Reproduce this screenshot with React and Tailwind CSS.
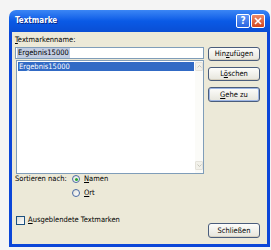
import React from 'react'

const font = "font-['DejaVu_Sans_Condensed','Liberation_Sans',sans-serif]"

function XpButton({ children, focus = false, className = '' }) {
  return (
    <div
      className={`flex w-[52px] items-center justify-center rounded-[3px] border border-[#4a5d7c] bg-gradient-to-b from-[#fdfdfb] to-[#e6e5dc] text-[7.5px] leading-none text-black ${
        focus ? 'shadow-[inset_0_0_0_1px_#9db5e4]' : 'shadow-[inset_0_-1px_0_#d6d0c0]'
      } ${className}`}
    >
      {children}
    </div>
  )
}

function Radio({ checked }) {
  return (
    <div className="flex h-[8px] w-[8px] items-center justify-center rounded-full border border-[#4a6aa4] bg-gradient-to-br from-[#e2e2da] to-white">
      {checked && <div className="h-[3px] w-[3px] rounded-full bg-[#29a531]" />}
    </div>
  )
}

export default function App() {
  return (
    <div className={`h-[250px] w-[271px] overflow-hidden bg-[#f4f4f4] pl-[9px] pt-[10px] ${font}`}>
      <div className="flex h-[237px] w-[261px] flex-col overflow-hidden rounded-t-[7px]">
        {/* title bar */}
        <div className="flex h-[22px] items-center justify-between bg-gradient-to-b from-[#3b86f5] via-[#0a5ae6] to-[#0a4ed4] pl-[6px] pr-[5px]">
          <span className="text-[8px] font-bold text-white [text-shadow:1px_1px_0_#0a2a8a]">Textmarke</span>
          <div className="flex gap-[1px]">
            <div className="flex h-[14px] w-[14px] items-center justify-center rounded-[2px] border border-white bg-gradient-to-b from-[#5d95f6] to-[#2a64e0] text-[10px] font-bold leading-none text-white">
              ?
            </div>
            <div className="flex h-[14px] w-[14px] items-center justify-center rounded-[2px] border border-white bg-gradient-to-b from-[#ec8a68] to-[#d2451d]">
              <svg width="8" height="8" viewBox="0 0 8 8">
                <path d="M1 1L7 7M7 1L1 7" stroke="white" strokeWidth="1.6" />
              </svg>
            </div>
          </div>
        </div>

        {/* client */}
        <div className="flex flex-1 border-x-[3px] border-b-[3px] border-[#0b46d8] bg-[#ece9d8] text-[7.5px] leading-none text-black">
          <div className="flex w-[192px] flex-col pl-[3px] pt-[3px]">
            <div className="flex h-[12px] items-start pt-[1px]">
              <span>
                <span className="underline">T</span>extmarkenname:
              </span>
            </div>
            <div className="flex h-[12px] w-[189px] items-center border border-[#7f9db9] bg-white pl-[1px]">
              <span className="bg-[#c2cde2] px-[1px] py-[1px]">Ergebnis15000</span>
            </div>
            <div className="ml-[1px] mt-[1px] flex h-[114px] w-[188px] border border-[#7f9db9] bg-white">
              <div className="flex-1 p-[1px]">
                <div className="flex h-[9px] items-center bg-[#316ac5] pl-[1px] text-white">Ergebnis15000</div>
              </div>
              <div className="flex w-[8px] flex-col justify-between bg-[#fbfbf8] py-[1px]">
                <div className="flex h-[9px] items-center justify-center rounded-[1px] border border-[#e4e2da] bg-[#f2f1ea]">
                  <svg width="5" height="3" viewBox="0 0 5 3">
                    <path d="M0.5 2.5L2.5 0.5L4.5 2.5" stroke="#c6c4ba" fill="none" />
                  </svg>
                </div>
                <div className="mb-[2px] flex h-[9px] items-center justify-center rounded-[1px] border border-[#e4e2da] bg-[#f2f1ea]">
                  <svg width="5" height="3" viewBox="0 0 5 3">
                    <path d="M0.5 0.5L2.5 2.5L4.5 0.5" stroke="#c6c4ba" fill="none" />
                  </svg>
                </div>
              </div>
            </div>
            <div className="mt-[0px] flex h-[10px] items-center">
              <span className="w-[57px]">Sortieren nach:</span>
              <Radio checked />
              <span className="ml-[4px]">
                <span className="underline">N</span>amen
              </span>
            </div>
            <div className="mt-[4px] flex h-[10px] items-center pl-[57px]">
              <Radio />
              <span className="ml-[4px]">
                <span className="underline">O</span>rt
              </span>
            </div>
            <div className="ml-[1px] mt-[17px] flex h-[10px] items-center">
              <div className="h-[9px] w-[9px] border border-[#1c5180] bg-gradient-to-br from-[#dcdcd4] to-white" />
              <span className="ml-[3px]">
                <span className="underline">A</span>usgeblendete Textmarken
              </span>
            </div>
          </div>

          <div className="ml-[4px] flex flex-col pb-[6px] pt-[15px]">
            <div className="flex flex-col gap-[6px]">
              <XpButton className="h-[14px]">
                <span>
                  Hin<span className="underline">z</span>ufügen
                </span>
              </XpButton>
              <XpButton className="h-[14px]">
                <span>
                  L<span className="underline">ö</span>schen
                </span>
              </XpButton>
              <XpButton className="h-[15px]" focus>
                <span>
                  <span className="underline">G</span>ehe zu
                </span>
              </XpButton>
            </div>
            <div className="flex-1" />
            <XpButton className="h-[15px] w-[51px]">Schließen</XpButton>
          </div>
        </div>
      </div>
    </div>
  )
}
